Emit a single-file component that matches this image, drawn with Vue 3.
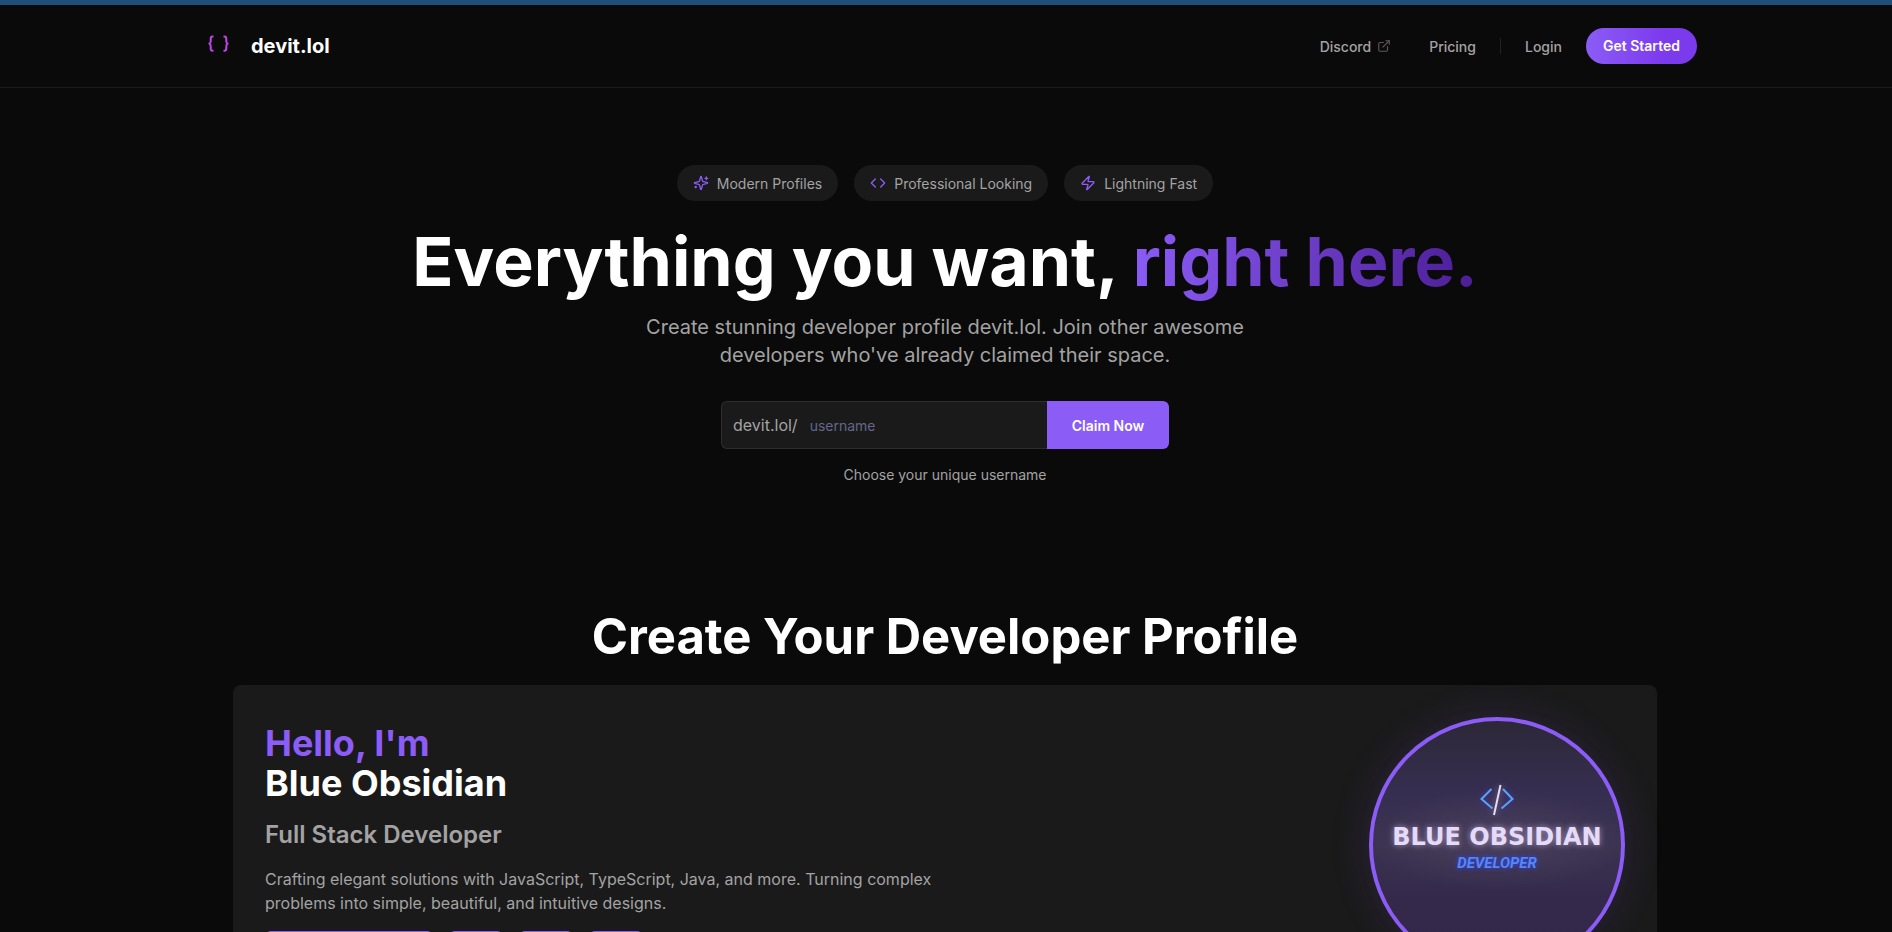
<template>
  <div class="page">
    <header class="site-header">
      <div class="header-inner">
        <a class="brand" href="#">
          <svg class="brand-icon" width="50" height="24" viewBox="0 0 50 24" fill="none">
            <path d="M20.5 2.500h-.8c-1.300 0-2 .7-2 2.200v2.500c0 1.300-.4 2-1.400 2.400 1 .4 1.400 1.100 1.400 2.400v2.500c0 1.500.7 2.200 2 2.200h.8" />
            <path d="M30.500 2.500h.8c1.300 0 2 .7 2 2.200v2.500c0 1.300.4 2 1.400 2.400-1 .4-1.400 1.100-1.400 2.400v2.500c0 1.500-.7 2.200-2 2.200h-.8" />
          </svg>
          <span>devit.lol</span>
        </a>
        <nav class="nav">
          <a class="nav-link" href="#">
            Discord
            <svg class="external" width="14" height="14" viewBox="0 0 24 24">
              <path d="M15 3h6v6" />
              <path d="M10 14 21 3" />
              <path d="M18 13v6a2 2 0 0 1-2 2H5a2 2 0 0 1-2-2V8a2 2 0 0 1 2-2h6" />
            </svg>
          </a>
          <a class="nav-link" href="#">Pricing</a>
          <span class="divider"></span>
          <a class="nav-link" href="#">Login</a>
          <a class="get-started" href="#">Get Started</a>
        </nav>
      </div>
    </header>

    <main class="main">
      <section class="hero">
        <ul class="features">
          <li v-for="feature in features" :key="feature.label" class="feature">
            <svg width="16" height="16" viewBox="0 0 24 24">
              <path v-for="d in feature.paths" :key="d" :d="d" />
            </svg>
            {{ feature.label }}
          </li>
        </ul>
        <h1 class="title">Everything you want, <span class="accent">right here.</span></h1>
        <p class="subtitle">
          Create stunning developer profile devit.lol. Join other awesome<br>
          developers who've already claimed their space.
        </p>
        <form class="claim" @submit.prevent>
          <div class="claim-field">
            <label for="username">devit.lol/</label>
            <input id="username" v-model="username" type="text" placeholder="username" autocomplete="off">
          </div>
          <button type="submit">Claim Now</button>
        </form>
        <p class="hint">Choose your unique username</p>
      </section>

      <section class="showcase">
        <h2>Create Your Developer Profile</h2>
        <article class="profile">
          <div class="profile-text">
            <h3><span class="hello">Hello, I'm</span><br>Blue Obsidian</h3>
            <p class="role">Full Stack Developer</p>
            <p class="bio">
              Crafting elegant solutions with JavaScript, TypeScript, Java, and more. Turning complex
              problems into simple, beautiful, and intuitive designs.
            </p>
            <div class="tags">
              <span v-for="(width, i) in tagWidths" :key="i" class="tag" :style="{ width: width + 'px' }"></span>
            </div>
          </div>
          <div class="avatar">
            <svg class="avatar-icon" width="36" height="34" viewBox="0 0 36 34" fill="none">
              <path class="bracket" d="M12.500 6 2.500 16 13.500 25.500" />
              <path class="bracket" d="M24 6 33.500 16 22.500 25.500" />
              <path class="slash" d="M21.500 2 15 32" />
            </svg>
            <span class="avatar-name">BLUE OBSIDIAN</span>
            <span class="avatar-sub">DEVELOPER</span>
          </div>
        </article>
      </section>
    </main>
  </div>
</template>

<script setup>
import { ref } from 'vue'

const username = ref('')

const features = [
  {
    label: 'Modern Profiles',
    paths: [
      'M9.937 15.500A2 2 0 0 0 8.500 14.063l-6.135-1.582a.5.5 0 0 1 0-.962L8.500 9.936A2 2 0 0 0 9.937 8.500l1.582-6.135a.5.5 0 0 1 .963 0L14.063 8.500A2 2 0 0 0 15.500 9.937l6.135 1.581a.5.5 0 0 1 0 .964L15.500 14.063a2 2 0 0 0-1.437 1.437l-1.582 6.135a.5.5 0 0 1-.963 0z',
      'M20 3v4',
      'M22 5h-4',
      'M4 17v2',
      'M5 18H3'
    ]
  },
  {
    label: 'Professional Looking',
    paths: ['m16 18 6-6-6-6', 'm8 6-6 6 6 6']
  },
  {
    label: 'Lightning Fast',
    paths: [
      'M4 14a1 1 0 0 1-.78-1.630l9.900-10.200a.5.5 0 0 1 .86.460l-1.920 6.020A1 1 0 0 0 13 10h7a1 1 0 0 1 .78 1.630l-9.900 10.200a.5.5 0 0 1-.86-.460l1.920-6.020A1 1 0 0 0 11 14z'
    ]
  }
]

const tagWidths = [168, 54, 54, 54]
</script>

<style>
body {
  background: #0a0a0a;
}
</style>

<style scoped>
.page {
  height: 100vh;
  overflow: hidden;
  box-sizing: border-box;
  border-top: 5px solid #1f4e79;
  background: #0a0a0a;
  color: #fff;
  font-family: Inter, 'Liberation Sans', sans-serif;
}

h1, h2, h3, p, ul {
  margin: 0;
  padding: 0;
}

a {
  color: inherit;
  text-decoration: none;
}

.site-header {
  padding-right: 2px;
  border-bottom: 1px solid #1b1b1b;
}

.header-inner {
  display: flex;
  align-items: center;
  justify-content: space-between;
  box-sizing: border-box;
  max-width: 1536px;
  height: 82px;
  margin: 0 auto;
  padding: 0 16px;
}

.brand {
  display: flex;
  align-items: center;
  gap: 8px;
  font-size: 20px;
  font-weight: 700;
}

.brand-icon path {
  stroke: #c144e8;
  stroke-width: 2;
  stroke-linejoin: round;
}

.nav {
  display: flex;
  align-items: center;
  gap: 24px;
  font-size: 14px;
  font-weight: 500;
}

.nav-link {
  display: flex;
  align-items: center;
  gap: 6px;
  color: #a3a3a3;
}

.nav-link:first-child {
  margin-right: 14px;
}

.external {
  fill: none;
  stroke: #5c5855;
  stroke-width: 2;
  stroke-linecap: round;
  stroke-linejoin: round;
}

.divider {
  width: 1px;
  height: 16px;
  background: #222;
}

.get-started {
  padding: 0 17px;
  border-radius: 18px;
  background: linear-gradient(to right, #8b5cf6, #7c3aed 70%);
  color: #fff;
  font-weight: 600;
  line-height: 36px;
}

.main {
  padding-right: 2px;
}

.hero {
  display: flex;
  flex-direction: column;
  align-items: center;
  padding-top: 77px;
  text-align: center;
}

.features {
  display: flex;
  gap: 16px;
  list-style: none;
}

.feature {
  display: flex;
  align-items: center;
  gap: 8px;
  height: 36px;
  padding: 0 16px;
  border-radius: 18px;
  background: #1a1a1a;
  color: #a3a3a3;
  font-size: 14px;
}

.feature svg {
  fill: none;
  stroke: #8b5cf6;
  stroke-width: 2;
  stroke-linecap: round;
  stroke-linejoin: round;
}

.title {
  margin-top: 24px;
  font-size: 68px;
  font-weight: 700;
  line-height: 72px;
}

.accent {
  background: linear-gradient(to right, #8b5cf6, #4c1d95);
  background-clip: text;
  color: transparent;
}

.subtitle {
  margin-top: 16px;
  color: #a3a3a3;
  font-size: 20px;
  line-height: 28px;
}

.claim {
  display: flex;
  width: 100%;
  max-width: 448px;
  height: 48px;
  margin-top: 32px;
}

.claim-field {
  display: flex;
  flex: 1;
  align-items: center;
  gap: 12px;
  min-width: 0;
  padding-left: 11px;
  border: 1px solid #2e2e2e;
  border-right: 0;
  border-radius: 6px 0 0 6px;
  background: #1a1a1a;
  color: #a3a3a3;
  font-size: 16px;
}

.claim-field input {
  flex: 1;
  min-width: 0;
  padding: 0;
  border: 0;
  outline: 0;
  background: none;
  color: #fff;
  font: inherit;
  font-size: 14px;
}

.claim-field input::placeholder {
  color: #64668b;
}

.claim button {
  width: 122px;
  border: 0;
  border-radius: 0 6px 6px 0;
  background: #8b5cf6;
  color: #fff;
  font: inherit;
  font-size: 14px;
  font-weight: 600;
}

.hint {
  margin-top: 16px;
  color: #a3a3a3;
  font-size: 14px;
  line-height: 20px;
}

.showcase {
  max-width: 1424px;
  margin: 128px auto 0;
}

.showcase h2 {
  font-size: 49px;
  font-weight: 700;
  line-height: 48px;
  text-align: center;
}

.profile {
  display: flex;
  justify-content: space-between;
  margin-top: 24px;
  padding: 32px;
  border-radius: 8px;
  background: #1a1a1a;
}

.profile-text {
  padding-top: 6px;
}

.profile h3 {
  font-size: 36px;
  font-weight: 700;
  line-height: 40px;
}

.hello {
  color: #8b5cf6;
}

.role {
  margin-top: 16px;
  color: #a3a3a3;
  font-size: 24px;
  font-weight: 600;
  line-height: 32px;
}

.bio {
  max-width: 672px;
  margin-top: 16px;
  color: #a3a3a3;
  font-size: 16px;
  line-height: 24px;
}

.tags {
  display: flex;
  gap: 16px;
  margin-top: 16px;
}

.tag {
  height: 28px;
  border-radius: 6px;
  background: #8b5cf6;
}

.avatar {
  display: flex;
  flex-direction: column;
  align-items: center;
  box-sizing: border-box;
  width: 256px;
  height: 256px;
  padding-top: 62px;
  border: 4px solid #8b5cf6;
  border-radius: 50%;
  background:
    radial-gradient(ellipse 130px 50px at 50% 48%, rgba(90, 78, 108, 0.5), transparent),
    linear-gradient(#2c2837, #362e50 28%, #3b3350 50%, #34294b 72%, #33284a);
  box-shadow: 0 0 40px rgba(139, 92, 246, 0.15);
}

.avatar-icon .bracket {
  stroke: #58a6ee;
  stroke-width: 2;
  filter: drop-shadow(0 0 3px #3f35c8);
}

.avatar-icon .slash {
  stroke: #e6dcf5;
  stroke-width: 2;
  filter: drop-shadow(0 0 3px #8d80a4);
}

.avatar-name {
  margin-top: 4px;
  color: #e5daf8;
  font-family: 'DejaVu Sans', sans-serif;
  font-size: 24px;
  font-weight: 700;
  line-height: 32px;
  white-space: nowrap;
  text-shadow: 0 0 6px #a496bd;
}

.avatar-sub {
  color: #5288f8;
  font-family: Roboto, sans-serif;
  font-size: 15px;
  font-style: italic;
  font-weight: 700;
  line-height: 20px;
  text-shadow: 0 0 5px #3345ff;
}
</style>
